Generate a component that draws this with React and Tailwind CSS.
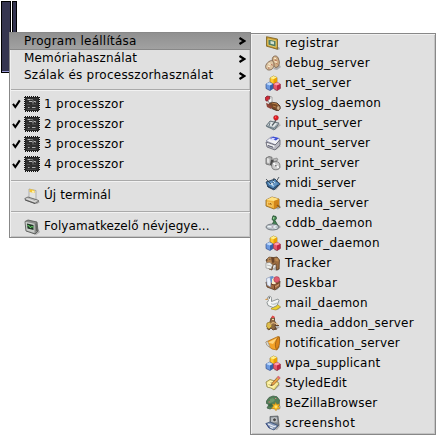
import React from "react";

const Icon = ({ children }) => (
  <svg viewBox="0 0 16 16" className="block h-4 w-4 shrink-0">{children}</svg>
);

const Shadow = ({ d = "M5 14 L11 15.5 L16 12 L13 10Z" }) => <path d={d} fill="#777" opacity=".5" />;

const Cubes = () => (
  <Icon>
    <Shadow d="M9 15l3 1 4-3-1-3z" />
    <path d="M5 3l3.500-2L12 2.500v4.500L8.500 9 5 7z" fill="#fc3" stroke="#8d6a18" strokeWidth=".6" />
    <path d="M5 3l3.500-2L12 2.500 8.500 4.300z" fill="#fff08a" />
    <path d="M8.500 4.300L12 2.500V7L8.500 9z" fill="#eaa000" />
    <path d="M1 9l3.500-1.700L8 9v4.500l-3 2L1 13.500z" fill="#6d9ae0" stroke="#243f83" strokeWidth=".6" />
    <path d="M1 9l3.500-1.700L8 9l-3 1.500z" fill="#c0dcff" />
    <path d="M5 10.500L8 9v4.500l-3 2z" fill="#3560a8" />
    <path d="M8.500 9L12 7.300 15.300 9v4.500L12 15.500l-3.500-2z" fill="#e5566c" stroke="#7c2437" strokeWidth=".6" />
    <path d="M8.500 9L12 7.300 15.300 9 12 10.500z" fill="#ffa0aa" />
    <path d="M12 10.500L15.300 9v4.500L12 15.500z" fill="#b82643" />
  </Icon>
);

const Registrar = () => (
  <Icon>
    <Shadow d="M8 13l5 2 2-1-1-2z" />
    <path d="M1.500 1.700L12.500 4v10.300L1.500 11.200z" fill="#c7972d" stroke="#766021" strokeWidth=".8" />
    <path d="M3 4l8 1.700v6.500L3 10z" fill="#507c65" stroke="#ecd16d" strokeWidth=".9" />
    <path d="M5.500 6l3.500.8v2.700l-3.500-.8z" fill="#d5e3d0" />
  </Icon>
);

const Debug = () => (
  <Icon>
    <Shadow d="M8 14l4 1 4-3-2-3z" />
    <path d="M8 2c2-2 5-1 5.500 2 1.500 3 1 6-1 8-2 1-4 0-4-3-1-2-2-5-.5-7z" fill="#cfae86" stroke="#745942" strokeWidth=".8" />
    <path d="M5 6c2-1 4 0 4 3 0 4-2 6-5 6s-4-3-3-5 2-3 4-4z" fill="#dcc4a2" stroke="#745942" strokeWidth=".8" />
    <path d="M9 3l2 .6m-1.500 3l2.500.6M3.500 8.500l2 1m-2.500 1.500l2 1" stroke="#fff2d4" strokeWidth="1.100" />
    <path d="M10 5l1.500.5m0 3l1 .5M3 13h1.500m2-4l.8 1.500" stroke="#aa4b38" strokeWidth=".8" />
  </Icon>
);

const Syslog = () => (
  <Icon>
    <Shadow d="M6 14l6 2 4-3-2-3z" />
    <path d="M5 7l7 1 3 3v3l-2 2-5-2-4-3z" fill="#794a27" stroke="#3d291c" strokeWidth=".8" />
    <path d="M7 8l5 1 2 3M8 11l3 1" stroke="#b78049" fill="none" />
    <ellipse cx="13.300" cy="13" rx="1.700" ry="2.200" fill="#d1b18c" stroke="#66442b" strokeWidth=".6" />
    <path d="M0 3l2-2 3 .5L5 6 1 6z" fill="#cf2735" stroke="#71202a" strokeWidth=".7" />
    <path d="M5 1.500l2 .5v5L4 8 3 5l2-1z" fill="#f2f2f2" stroke="#666" strokeWidth=".5" />
    <path d="M1 8l3 1 3 3-1 2-4-2z" fill="#8e4437" />
  </Icon>
);

const Joystick = () => (
  <Icon>
    <Shadow d="M7 13l3 2 6-5-2-1z" />
    <path d="M1 11l4-5 9 2-3 5-2 2z" fill="#a9b3b8" stroke="#58666d" strokeWidth=".8" />
    <path d="M3 10l3-3 6 1.500L9 12z" fill="#e5eaeb" />
    <path d="M7 10.500l3-3.500 1.300-4" stroke="#555f64" strokeWidth="1.300" fill="none" />
    <path d="M2 11.500l7 2 3-3M5 8l-1 3" stroke="#667781" fill="none" />
    <circle cx="11" cy="2.800" r="2.400" fill="#e61c22" stroke="#931319" strokeWidth=".5" />
    <circle cx="10.500" cy="2.100" r=".7" fill="#ff8d84" />
  </Icon>
);

const Mount = () => (
  <Icon>
    <Shadow d="M8 14l3 1 5-4-2-1z" />
    <path d="M1 6l5-4 9 2-4 6z" fill="#f2f2f5" stroke="#777b9a" strokeWidth=".7" />
    <path d="M5 3.500L8 1.500l6 1.500-3 2.500z" fill="#3c4dd6" />
    <path d="M7.500 2.700l3 .7-3 2.100-3-.5z" fill="#dcdcf8" />
    <path d="M1 7l9 3 5-5v5l-5 5-8-3z" fill="#b6b6bf" stroke="#62626e" strokeWidth=".8" />
    <path d="M2 8l7.500 2.500v2L2 10z" fill="#ededf0" />
    <path d="M3 10.500l5 1.700" stroke="#55576a" />
  </Icon>
);

const Printer = () => (
  <Icon>
    <Shadow d="M7 14l6 1 3-3-3-2z" />
    <path d="M1 3l3-1.500 3 .8v6L4.500 10 1 9z" fill="#aaa" stroke="#666" strokeWidth=".8" />
    <path d="M2 3l2.500.8v4.500L2 7.500z" fill="#e2e2e2" />
    <path d="M6 5l5-.5 1 3.500-4 4-3-2z" fill="#484848" />
    <path d="M8 4l4-1 1 2-4 2z" fill="#bbb" stroke="#666" strokeWidth=".5" />
    <circle cx="10.800" cy="10.700" r="4.100" fill="#c9c9c9" stroke="#707070" strokeWidth=".8" />
    <path d="M10.800 10.700L8.500 8m2.300 2.700l3 2" stroke="#fff" strokeWidth="1.500" />
    <circle cx="10.800" cy="10.700" r="1.300" fill="#777" stroke="#fff" strokeWidth=".6" />
  </Icon>
);

const Midi = () => (
  <Icon>
    <Shadow d="M8 14l3 1 5-6-1-2z" />
    <path d="M1 7l9-3 5 5-6 6-6-3z" fill="#3f73a6" stroke="#253d56" strokeWidth=".8" />
    <path d="M2.500 7.500L9.500 5 13 9l-5 4z" fill="#6597c4" />
    <path d="M1 4l5 5m3-6l-1 5m6-6l-3 5" stroke="#333e48" strokeWidth=".8" />
    <path d="M4 8.500l1.500 1.500M8 6l2 2m-3 2l2 1" stroke="#c2dff4" />
    <circle cx="7" cy="9" r="1" fill="#e4ecf2" />
    <path d="M2 11l6 3 5-4" stroke="#1e344c" fill="none" strokeWidth=".8" />
  </Icon>
);

const Media = () => (
  <Icon>
    <Shadow d="M9 13l4 1.500 3-2-2-3z" />
    <path d="M1 5l6-3 7 2v7l-5 3-8-3z" fill="#f0b23d" stroke="#8b621d" strokeWidth=".8" />
    <path d="M1 5l6-3 7 2-5 2z" fill="#ffe285" />
    <path d="M9 6l5-2v7l-5 3z" fill="#d0841b" />
    <path d="M2.500 7L7 8.200v3L2.500 10z" fill="#e09a2c" stroke="#ffe08a" strokeWidth=".6" />
    <path d="M5 8.300l1.500 1" stroke="#8a5a18" />
    <path d="M12 10l3 2.500" stroke="#8a5a18" strokeWidth="1.300" />
  </Icon>
);

const Cd = () => (
  <Icon>
    <Shadow d="M7 14l5 1 4-3-2-2z" />
    <path d="M8 .8l3 .7.500 2-1.500 2 3.500 6-7-1 2.500-4.500-2-1.500z" fill="#428552" stroke="#254b30" strokeWidth=".8" />
    <path d="M8 2l2 .8-2 1.700z" fill="#a6dba0" />
    <ellipse cx="7.500" cy="12" rx="6.500" ry="3" fill="#b7bec5" stroke="#626b71" strokeWidth=".8" />
    <path d="M2.500 11.500l5 .5 4-1.500M7.500 12l4 1.500" stroke="#ecf3f6" strokeWidth="1.300" fill="none" />
    <ellipse cx="7.500" cy="12" rx="1.600" ry=".8" fill="#77637e" stroke="#fff" strokeWidth=".5" />
  </Icon>
);

const Tracker = () => (
  <Icon>
    <Shadow d="M7 14l5 2 3-2-1-4z" />
    <path d="M6 3l6-1 2.500 3-.5 9-2.500 1L11 9 8 10l-1 5-3-1V8z" fill="#9b6c40" stroke="#5a3c25" strokeWidth=".8" />
    <path d="M1 5l3-3 4 .5L9 7 6 9 2 8z" fill="#b58554" stroke="#5a3c25" strokeWidth=".6" />
    <path d="M6 2l3 1v4L7 8z" fill="#68442a" />
    <path d="M10 3l3 .5.500 3-3-.5z" fill="#bc8951" />
    <path d="M1 8l4-.5L7.500 10 6 14l-5-1z" fill="#f1f2ee" stroke="#888" strokeWidth=".6" />
    <path d="M2 10l4 1" stroke="#bbb" />
    <path d="M1 5h1.500m2-.7h.8" stroke="#302d2b" />
  </Icon>
);

const Deskbar = () => (
  <Icon>
    <Shadow d="M7 14l5 1 4-4-2-1z" />
    <path d="M1 7l6 1 8-2-.5 5.500L10 15l-8-3z" fill="#a06a42" stroke="#573820" strokeWidth=".8" />
    <path d="M1.500 3.500L5 2l1 6-.5 4L2 10z" fill="#e9f0fa" stroke="#7889ad" strokeWidth=".6" />
    <path d="M5 1.500L8 1l1 2-1 5-2-1z" fill="#6693d0" />
    <path d="M7 4l3-2 1 8-4-1z" fill="#f9edc6" />
    <circle cx="11.700" cy="4.500" r="2.900" fill="#e35b6f" stroke="#8f3346" strokeWidth=".5" />
    <path d="M6 9l3 1 5.500-2.500M9.500 10.500V14" stroke="#6d3d22" fill="none" />
    <path d="M10 12l4-2.500" stroke="#d29a70" />
  </Icon>
);

const Mail = () => (
  <Icon>
    <Shadow d="M9 14l4 1 3-3-3-1z" />
    <path d="M8 12l4-3 3.500 3-4.500 3-5-1z" fill="#ecd12e" stroke="#a08320" strokeWidth=".6" />
    <path d="M2.500 3.500c0-3 4-3 4 0v3l6.500-2.500 1 1.500-2 5-4 2-5-2-1-3 1.500-2z" fill="#f4f5f4" stroke="#777f80" strokeWidth=".8" />
    <path d="M6 8c2 1.500 4 0 7-1-1 3-5 4-7 2z" fill="#bfcace" />
    <path d="M2.500 3.500L.5 4v1l2.500-.5z" fill="#d48928" />
    <circle cx="4.300" cy="2.900" r=".7" fill="#111" />
  </Icon>
);

const Addon = () => (
  <Icon>
    <Shadow d="M7 14l4 1 4-3-3-1z" />
    <path d="M6 3l2-1.500L9.500 3v3L11 8l-1 3 1 3-3 1-2-2-2 2-2-1.500L4 9l1-2z" fill="#8e6b43" stroke="#573a24" strokeWidth=".8" />
    <path d="M6 2.500L7.500.5l2 1v1.500H7z" fill="#e24c4d" />
    <path d="M2 8l3-1 2 4-3 3-2.500-2z" fill="#dfc048" stroke="#8c702b" strokeWidth=".7" />
    <path d="M4 10.500l4-3 5 2" stroke="#d8ae78" strokeWidth="1.200" fill="none" />
    <path d="M10 10.500h4M9 14h3" stroke="#65442a" />
    <path d="M7 4.500h2" stroke="#f2d4ae" />
  </Icon>
);

const Horn = () => (
  <Icon>
    <Shadow d="M8 13l4 2 3-3-1-2z" />
    <path d="M1 7L13 1.500l1.500 1-1 10-1.500 2.500-5-1-5-4z" fill="#f4a328" stroke="#ae6e19" strokeWidth=".8" />
    <path d="M3 7.500L12 3 8 9z" fill="#ffd37a" />
    <path d="M14 1.500c-3 2.500-5 9-2.500 13 3-2 4-9 2.500-13z" fill="#dd8518" stroke="#8c571a" strokeWidth=".7" />
    <path d="M.8 7l1.700-.7L5 12 2 10.500z" fill="#d8dcda" stroke="#888" strokeWidth=".5" />
  </Icon>
);

const Edit = () => (
  <Icon>
    <Shadow d="M7 13l3 2 5-5-2-1z" />
    <path d="M1 7l4-2.500 8 2.500 1 2-5 6-3-2-4-1z" fill="#f2e58c" stroke="#8d8444" strokeWidth=".8" />
    <path d="M2.500 7.500l3-1.800 6.500 2-3.500 5-5.500-1z" fill="#fff4ab" />
    <path d="M3.500 9.500l4 1.200m-2-3.200l3 .8" stroke="#b4a65e" strokeWidth=".8" />
    <path d="M6 10.500l.8-2L13 1.500l2 1.700L8.500 10z" fill="#eda341" stroke="#7c5634" strokeWidth=".7" />
    <path d="M12 2.300l1.300-1.500 2.200 1.700L14 4.200z" fill="#dc7280" />
    <path d="M6 10.500l.8-.8" stroke="#333" />
  </Icon>
);

const Browser = () => (
  <Icon>
    <Shadow d="M8 14l6 1 2-3-2-3z" />
    <path d="M1.500 6L4 2.500 8 1l4 .8L14.500 5 14 11l-3 3-3-1-3 1-3-1 2-3.500-2.500-1z" fill="#527f58" stroke="#42604a" strokeWidth=".8" />
    <path d="M5 4l3-1 2 2-2 2-3 1z" fill="#6c966b" />
    <path d="M3 9.500l4-1L8 11l-3 1z" fill="#3c6846" />
    <path d="M10 3.500h1.300M3.500 7H5" stroke="#d38080" />
    <path d="M10.500 7.500l1.300 2 3-.5-1.300 2.500 1.500 2-2.800.3-1.200 2-1.500-2-3-.3 2-2.500-1-2 2.500.5z" fill="#f9bc25" stroke="#bd7e17" strokeWidth=".5" />
    <circle cx="10.900" cy="11.700" r="1.300" fill="#ffe36a" />
  </Icon>
);

const Screenshot = () => (
  <Icon>
    <Shadow d="M7 14l5 1 3-4-1-2z" />
    <path d="M5 1.500L13 1l1 9-2 2-7-2z" fill="#7b8085" stroke="#50565c" strokeWidth=".7" />
    <path d="M6 2.500l6-.3.5 5.300L6 7z" fill="#b2b8be" />
    <circle cx="9.500" cy="4.800" r="1.900" fill="#444" stroke="#eee" strokeWidth=".6" />
    <path d="M1 8.500L5 7l8 3.500L9 15l-5-2z" fill="#8b9cba" stroke="#344d75" strokeWidth=".8" />
    <path d="M3 9l6 2.500 2-.5M5 12l3 1.200" stroke="#e8edf4" strokeWidth="1.200" fill="none" />
    <path d="M1 8.500L4.500 13" stroke="#394a86" />
  </Icon>
);

const Chip = () => (
  <Icon>
    <path d="M1 .5h14M1 15.500h14M.5 1v14M15.500 1v14" stroke="#111" strokeDasharray="1 1" />
    <rect x="1" y="1" width="14" height="14" fill="#303030" />
    <path d="M1 1.500h14M1 14.500h14M1.500 1v14M14.500 1v14" stroke="#222" />
    <path d="M3.500 3.500h3m1 0h1M5 5.500h3m1-1v3m1-2h1.500v1" stroke="#c4c4c4" fill="none" strokeWidth=".9" />
    <path d="M3 8.500h3m2 0h4" stroke="#4c4c4c" />
    <path d="M4 11.500h1.500m2.500 0h3.500" stroke="#aaa" />
    <path d="M3 13.500h9" stroke="#474747" />
  </Icon>
);

const Terminal = () => (
  <Icon>
    <Shadow d="M9 15l4 1 3-2-3-1z" />
    <path d="M5 1l7 1.500V12l-7-2z" fill="#e3e3e0" stroke="#999" strokeWidth=".7" />
    <path d="M5.500 1l5 1v3l-5-1z" fill="#f3c534" />
    <path d="M8 2.500l2 .4V5L8 4.500z" fill="#fff0a8" />
    <path d="M.8 10.500L4 9l9.500 3 1.500 1-4 2.500L1.500 12z" fill="#b9b9b7" stroke="#606060" strokeWidth=".8" />
    <path d="M2.500 10.600l8 2.900 2-1" stroke="#f2f2f2" strokeWidth=".8" fill="none" />
    <path d="M1 12l10 3.500" stroke="#444" strokeWidth=".7" />
  </Icon>
);

const Monitor = () => (
  <Icon>
    <Shadow d="M8 14l4 2 4-3-2-3z" />
    <path d="M1 2.500L4 1l9 2 1 9-3 3-9-3z" fill="#8a8c8a" stroke="#515351" strokeWidth=".8" />
    <path d="M1.500 2.800l9 2V14l-8-2.500z" fill="#c9ccc9" />
    <path d="M3 4.500l6.500 1.500v5L3.500 9.400z" fill="#1f3526" />
    <path d="M3.500 6.500l2 .5 1 2 1-1.500 2 .6" stroke="#68dd68" fill="none" />
    <path d="M12 4.500l.8 7.500" stroke="#5e605e" strokeWidth="1.300" />
  </Icon>
);

const apps = [
  ["registrar", Registrar, "tracking-[0.35px]"],
  ["debug_server", Debug, "tracking-[0.25px]"],
  ["net_server", Cubes, "tracking-[0.25px]"],
  ["syslog_daemon", Syslog, "tracking-[0.25px]"],
  ["input_server", Joystick, "tracking-[0.18px]"],
  ["mount_server", Mount, "tracking-[0.18px]"],
  ["print_server", Printer, "tracking-[0.18px]"],
  ["midi_server", Midi, "tracking-[0.08px]"],
  ["media_server", Media, "tracking-[0.18px]"],
  ["cddb_daemon", Cd, "tracking-[0.3px]"],
  ["power_daemon", Cubes, "tracking-[0.22px]"],
  ["Tracker", Tracker, "tracking-[0.5px]"],
  ["Deskbar", Deskbar, "tracking-[0.35px]"],
  ["mail_daemon", Mail, "tracking-[0.18px]"],
  ["media_addon_server", Addon, "tracking-[0.22px]"],
  ["notification_server", Horn, "tracking-[0.18px]"],
  ["wpa_supplicant", Cubes, "tracking-[0.18px]"],
  ["StyledEdit", Edit, "tracking-[0.08px]"],
  ["BeZillaBrowser", Browser, "tracking-[0.18px]"],
  ["screenshot", Screenshot, "tracking-[0.45px]"],
];

const Separator = () => <div className="ml-px h-0.5 border-t border-b border-t-[#aaa] border-b-[#f2f2f2]" />;

const SubmenuRow = ({ label, active, spacing }) => (
  <div
    className={`flex h-[17px] items-center justify-between pr-[4px] pl-3.5 leading-[17px] ${
      active ? "border-b border-[#888] bg-linear-to-b from-[#909090] to-[#a1a1a1]" : ""
    }`}
  >
    <span className={`h-[17px] ${spacing}`}>{label}</span>
    <svg viewBox="0 0 7 8" className="h-[8px] w-[7px]">
      <path d="M.5 1L5.300 4 .5 7" fill="none" stroke="#000" strokeWidth="2.200" />
    </svg>
  </div>
);

const CpuRow = ({ n }) => (
  <div className="flex h-5 items-center pl-0.5">
    <svg viewBox="0 0 9 10" className="mr-[3px] h-2.5 w-[9px]">
      <path d="M1 4.800L3.300 8 7.800 1.300" fill="none" stroke="#000" strokeWidth="2.100" />
    </svg>
    <Chip />
    <span className="ml-1 tracking-[0.32px]">{n} processzor</span>
  </div>
);

export default function App() {
  return (
    <div className="relative h-[435px] w-[436px] overflow-hidden bg-white font-['DejaVu_Sans',sans-serif] text-[12px] leading-5 whitespace-nowrap text-black">
      <div className="flex gap-px pt-px pl-px">
        <div className="h-[72px] w-2.5 border border-black bg-[#353550] shadow-[inset_0_-1px_#9a9ad8]" />
        <div className="h-[72px] w-[5px] border border-black bg-[#353550]" />
      </div>

      <div className="absolute top-8 left-[9px] flex h-[206px] w-[242px] flex-col border border-[#888] bg-[#e0e0e0] shadow-[inset_1px_0_#f0f0f0,inset_-1px_-1px_#c4c4c4]">
        <SubmenuRow label="Program leállítása" active spacing="tracking-[0.25px]" />
        <SubmenuRow label="Memóriahasználat" spacing="tracking-[0.18px]" />
        <SubmenuRow label="Szálak és processzorhasználat" spacing="tracking-[0.24px]" />
        <div className="pt-[5px] pb-[3px]"><Separator /></div>
        {[1, 2, 3, 4].map((n) => <CpuRow key={n} n={n} />)}
        <div className="pt-1.5 pb-[3px]"><Separator /></div>
        <div className="flex h-5 pl-3.5">
          <div className="pt-[3px]"><Terminal /></div>
          <span className="ml-1 tracking-[0.08px]">Új terminál</span>
        </div>
        <div className="pt-1.5 pb-[3px]"><Separator /></div>
        <div className="flex h-5 pl-3.5">
          <div className="pt-[3px]"><Monitor /></div>
          <span className="ml-1 tracking-[0.07px]">Folyamatkezelő névjegye...</span>
        </div>
      </div>

      <div className="absolute top-[33px] left-[250px] h-[402px] w-[186px] bg-[#e0e0e0] pl-[15px] shadow-[inset_0_0_0_1px_#888,inset_2px_2px_#f0f0f0,inset_-2px_-2px_#c4c4c4]">
        {apps.map(([name, Glyph, spacing]) => (
          <div key={name} className="flex h-5 items-center">
            <Glyph />
            <span className={`ml-1 ${spacing}`}>{name}</span>
          </div>
        ))}
      </div>
    </div>
  );
}
